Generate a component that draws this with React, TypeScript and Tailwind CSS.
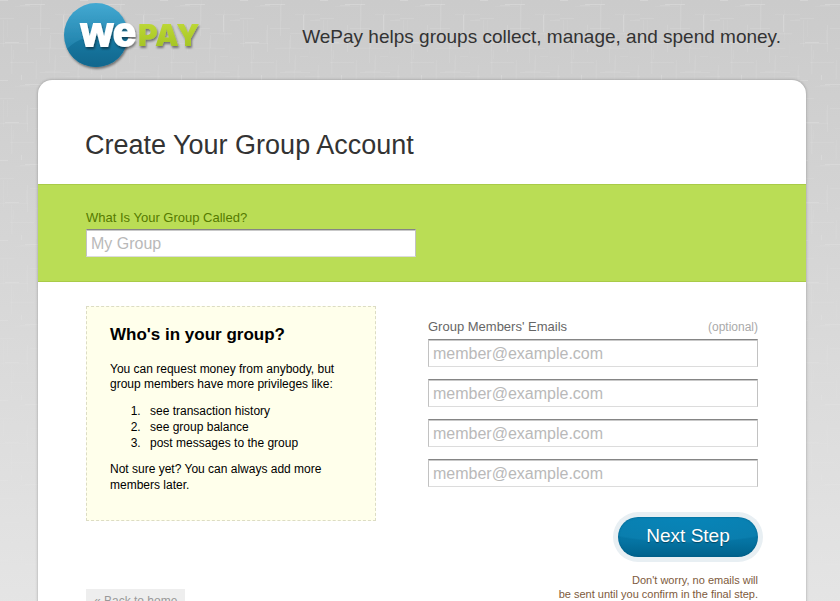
const memberFields = ['member-1', 'member-2', 'member-3', 'member-4']

const fieldClass =
  'block h-7 w-full border border-t-[#858585] border-x-[#c2c2c2] border-b-[#dcdcdc] bg-white px-1 pt-px text-base text-gray-800 shadow-[inset_0_1px_0_#c9c9c9] placeholder:text-[#b9b9b9] placeholder:opacity-100 focus:outline-none'

/* Woven threads, spread over an 80px tile; the same pattern on every load */
const TILE = 80
const threads = Array.from({ length: 44 }, (_, i) => ({
  id: i,
  across: i % 2 === 0,
  start: (i * 47 + 13 * (i % 5)) % TILE,
  offset: (i * 29 + 7 * (i % 3)) % TILE,
  length: 8 + ((i * 11) % 24),
  opacity: i % 9 === 0 ? 0.2 : 0.04 + ((i * 7) % 5) * 0.015,
}))

function Linen() {
  return (
    <svg className="absolute inset-0 -z-10 h-full w-full" aria-hidden="true">
      <defs>
        <pattern id="linen" width={TILE} height={TILE} patternUnits="userSpaceOnUse">
          {threads.map(({ id, across, start, offset, length, opacity }) => (
            <rect
              key={id}
              x={across ? start : offset}
              y={across ? offset : start}
              width={across ? length : 1}
              height={across ? 1 : length}
              fill="#fff"
              opacity={opacity}
            />
          ))}
        </pattern>
        <linearGradient id="linen-fade" x1="0" y1="0" x2="0" y2="1">
          <stop offset="0" stopColor="#fff" />
          <stop offset="1" stopColor="#fff" stopOpacity="0.15" />
        </linearGradient>
        <mask id="linen-mask">
          <rect width="100%" height="100%" fill="url(#linen-fade)" />
        </mask>
      </defs>
      <rect width="100%" height="100%" fill="url(#linen)" mask="url(#linen-mask)" />
    </svg>
  )
}

function Logo() {
  return (
    <svg width="146" height="76" viewBox="0 0 146 76" role="img" aria-label="WePay">
      <defs>
        <linearGradient id="disc" x1="0" y1="0" x2="0" y2="1">
          <stop offset="0" stopColor="#43a9d2" />
          <stop offset="1" stopColor="#12719a" />
        </linearGradient>
        <linearGradient id="disc-low" x1="0" y1="0" x2="0" y2="1">
          <stop offset="0" stopColor="#187ca6" />
          <stop offset="1" stopColor="#11658b" />
        </linearGradient>
        <linearGradient id="lime" x1="0" y1="0" x2="0" y2="1">
          <stop offset="0" stopColor="#c3dc3a" />
          <stop offset="1" stopColor="#9fc01f" />
        </linearGradient>
        <clipPath id="disc-clip">
          <circle cx="36" cy="35" r="32" />
        </clipPath>
        <filter id="drop" x="-20%" y="-20%" width="140%" height="150%">
          <feDropShadow dx="1" dy="2" stdDeviation="1.2" floodColor="#000" floodOpacity="0.45" />
        </filter>
      </defs>
      <circle cx="36" cy="35" r="32" fill="url(#disc)" filter="url(#drop)" />
      <path d="M0 58C8 44 22 36 44 34C54 33 62 34 72 36V70H0Z" fill="url(#disc-low)" clipPath="url(#disc-clip)" />
      <g filter="url(#drop)">
        <text x="78" y="46" fontFamily="Inter, Arial, sans-serif" fontWeight="900" fontSize="30" fill="url(#lime)">
          PAY
        </text>
        <text
          x="21"
          y="46"
          fontFamily="'Liberation Sans', Arial, sans-serif"
          fontWeight="700"
          fontSize="41"
          fill="#fff"
          stroke="#fff"
          strokeWidth="2"
        >
          we
        </text>
      </g>
    </svg>
  )
}

export default function App() {
  return (
    <div className="relative isolate min-h-screen bg-linear-to-b from-[#cbcbcb] to-[#e6e6e6] pr-[34px] pl-[38px] font-['Liberation_Sans',Arial,sans-serif]">
      <Linen />
      <header className="flex h-20 items-start justify-between pr-[25px] pl-[22px]">
        <a href="#home">
          <Logo />
        </a>
        <p className="pt-[23px] text-[19px] leading-7 text-[#333]">
          WePay helps groups collect, manage, and spend money.
        </p>
      </header>

      <main className="rounded-t-[14px] bg-white pb-6 shadow-[0_0_3px_rgba(0,0,0,0.3)]">
        <h1 className="px-[47px] pt-[49px] pb-[23px] text-[27px] leading-8 text-[#333]">Create Your Group Account</h1>

        <form onSubmit={(event) => event.preventDefault()}>
          <section className="border-y border-[#a9cb48] bg-[#badd55] px-12 pt-[23px] pb-6">
            <label htmlFor="group-name" className="mb-px block text-[13px] leading-5 text-[#557a00]">
              What Is Your Group Called?
            </label>
            <div className="w-[330px]">
              <input id="group-name" type="text" placeholder="My Group" className={fieldClass} />
            </div>
          </section>

          <section className="flex items-start justify-between px-12 pt-6">
            <aside className="w-[290px] border border-dashed border-[#dcdcc4] bg-[#ffffeb] px-[23px] pt-4 pb-[27px] text-xs leading-4 text-black">
              <h2 className="mb-[15px] text-[17px] leading-6 font-bold">Who's in your group?</h2>
              <p className="leading-[15px]">
                You can request money from anybody, but group members have more privileges like:
              </p>
              <ol className="mt-[11px] mb-2.5 list-decimal pl-[34px]">
                <li className="pl-1.5">see transaction history</li>
                <li className="pl-1.5">see group balance</li>
                <li className="pl-1.5">post messages to the group</li>
              </ol>
              <p>Not sure yet? You can always add more members later.</p>
            </aside>

            <div className="w-[330px] pt-[11px]">
              <div className="mb-0.5 flex items-center justify-between leading-5">
                <label htmlFor="member-1" className="text-[13px] text-[#666]">
                  Group Members' Emails
                </label>
                <span className="text-xs leading-5 text-[#aaa]">(optional)</span>
              </div>
              <div className="flex flex-col gap-3">
                {memberFields.map((id, index) => (
                  <input
                    key={id}
                    id={id}
                    type="email"
                    aria-label={`Member email ${index + 1}`}
                    placeholder="member@example.com"
                    className={fieldClass}
                  />
                ))}
              </div>
              <div className="mt-[30px] flex flex-col items-end">
                <button
                  type="submit"
                  className="h-10 w-[140px] rounded-full bg-[radial-gradient(ellipse_110px_26px_at_50%_0,#0785b9_0,#0a7eae_94%,transparent_100%),linear-gradient(#0780b0,#0574a3_60%,#00628c)] pb-0.5 text-[19px] text-white inset-shadow-[0_0_2px_#00577d] ring-[5px] ring-[#e8eff3] text-shadow-[0_1px_1px_rgba(0,0,0,0.4)]"
                >
                  Next Step
                </button>
                <p className="mt-4 text-right text-[11px] leading-[14px] text-[#7d5a3c]">
                  Don't worry, no emails will
                  <br />
                  be sent until you confirm in the final step.
                </p>
              </div>
            </div>
          </section>
        </form>

        <div className="-mt-[13px] px-12">
          <a href="#home" className="inline-block bg-[#eee] px-2 py-1 text-xs leading-4 text-[#999]">
            « Back to home
          </a>
        </div>
      </main>
    </div>
  )
}
